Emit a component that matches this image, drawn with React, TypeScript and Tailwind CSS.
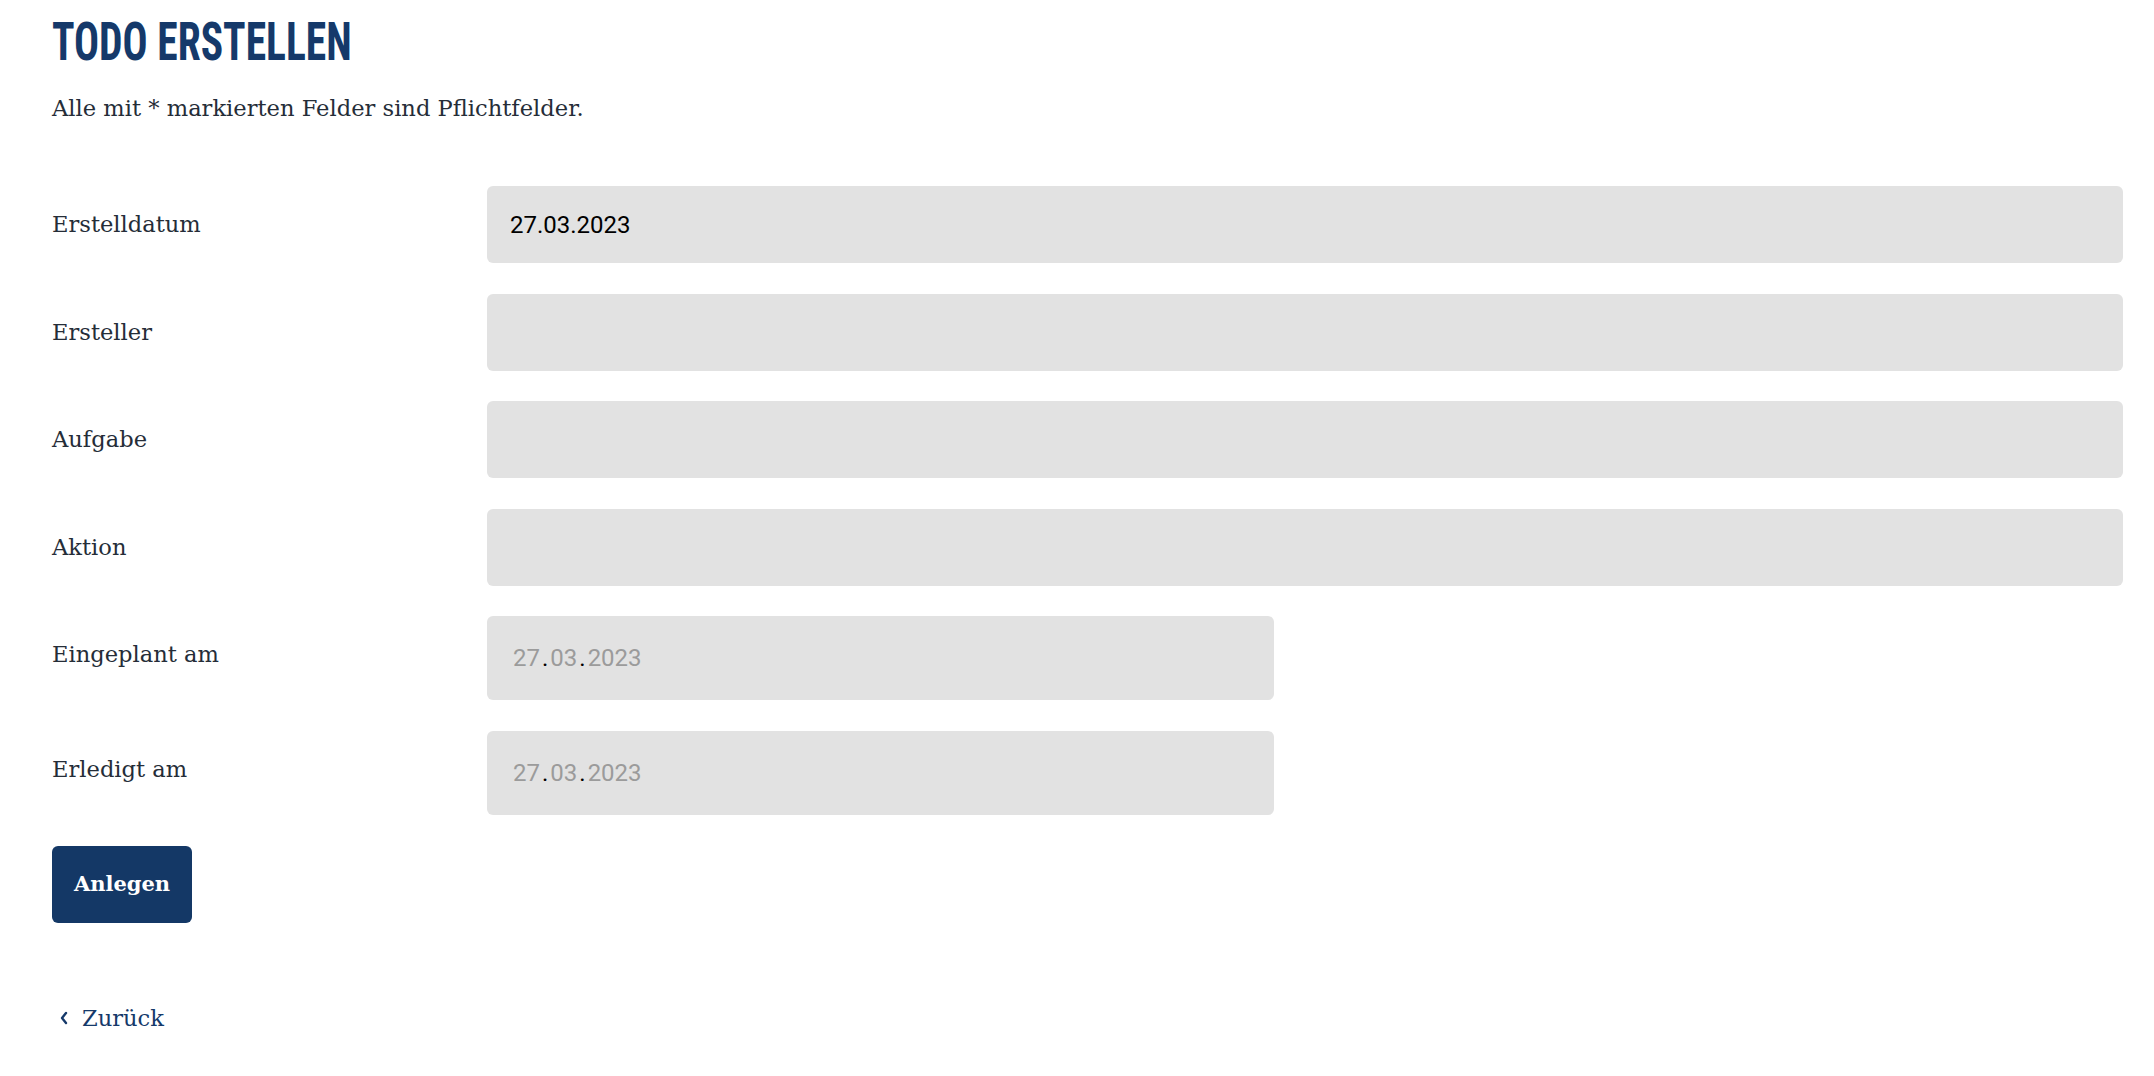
const slab = { fontFamily: '"DejaVu Serif", "Liberation Serif", serif' };

function Field({ label, children }: { label: string; children: React.ReactNode }) {
  return (
    <div className="flex items-start">
      <label className="w-[435px] shrink-0 pt-[22px] text-[22.6px] leading-[32px] text-[#252d38]" style={slab}>
        {label}
      </label>
      {children}
    </div>
  );
}

function TextBox({ value }: { value?: string }) {
  return (
    <div className="flex h-[77px] flex-1 items-center rounded-[6px] bg-[#e2e2e2] px-[23px] font-['Roboto',sans-serif] text-[24px] text-black">
      {value}
    </div>
  );
}

function DateBox({ value }: { value: string }) {
  const [d, m, y] = value.split(".");
  return (
    <div className="flex h-[84px] w-[787px] items-center rounded-[6px] bg-[#e2e2e2] px-[26px] font-['Roboto',sans-serif] text-[24px] text-[#9b9b9b]">
      <span>{d}</span>
      <span className="mx-[2px] text-black">.</span>
      <span>{m}</span>
      <span className="mx-[2px] text-black">.</span>
      <span>{y}</span>
    </div>
  );
}

export default function App() {
  return (
    <div className="min-h-screen bg-white pl-[52px] pr-[31px] pt-[12px]">
      <h1 className="origin-left scale-x-[0.77] whitespace-nowrap font-['Liberation_Sans_Narrow','Roboto_Condensed','DejaVu_Sans_Condensed',sans-serif] text-[54px] font-bold leading-[60px] text-[#15396a]">
        TODO ERSTELLEN
      </h1>
      <p className="mt-[20px] text-[22.6px] leading-[32px] text-[#252d38]" style={slab}>
        Alle mit * markierten Felder sind Pflichtfelder.
      </p>

      <form className="mt-[62px] flex flex-col gap-[30.6px]" onSubmit={(e) => e.preventDefault()}>
        <Field label="Erstelldatum">
          <TextBox value="27.03.2023" />
        </Field>
        <Field label="Ersteller">
          <TextBox />
        </Field>
        <Field label="Aufgabe">
          <TextBox />
        </Field>
        <Field label="Aktion">
          <TextBox />
        </Field>
        <Field label="Eingeplant am">
          <DateBox value="27.03.2023" />
        </Field>
        <Field label="Erledigt am">
          <DateBox value="27.03.2023" />
        </Field>
        <div>
          <button
            type="submit"
            className="h-[77px] w-[140px] rounded-[6px] bg-[#143866] text-[21px] font-bold text-white"
            style={slab}
          >
            Anlegen
          </button>
        </div>
      </form>

      <a href="#" className="mt-[79px] flex items-center gap-[13px] text-[22.6px] leading-[32px] text-[#15396a]" style={slab}>
        <svg width="10" height="14" viewBox="0 0 10 14" fill="none" className="ml-[7px]">
          <path d="M7 2L3 7l4 5" stroke="#15396a" strokeWidth="2.4" strokeLinecap="round" strokeLinejoin="round" />
        </svg>
        Zurück
      </a>
    </div>
  );
}
